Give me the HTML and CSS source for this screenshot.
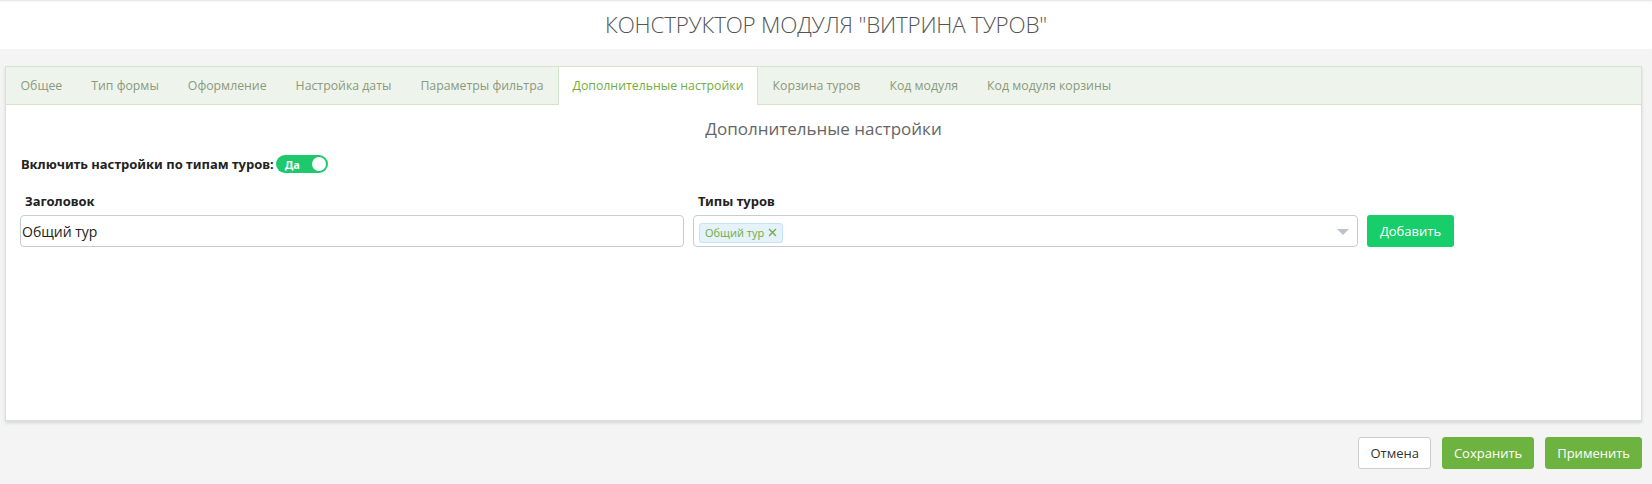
FILE: index.html
```html
<!DOCTYPE html>
<html lang="ru">
<head>
  <meta charset="UTF-8" />
  <title>Конструктор модуля "Витрина туров"</title>
  <link rel="stylesheet" href="styles.css">
</head>
<body>

  <div id="header">
    <h1>КОНСТРУКТОР МОДУЛЯ "ВИТРИНА ТУРОВ"</h1>
  </div>

  <div id="content">
    <div class="card">
      <div class="tabs">
        <a href="#">Общее</a>
        <a href="#">Тип формы</a>
        <a href="#">Оформление</a>
        <a href="#">Настройка даты</a>
        <a href="#">Параметры фильтра</a>
        <a href="#" class="active">Дополнительные настройки</a>
        <a href="#">Корзина туров</a>
        <a href="#">Код модуля</a>
        <a href="#">Код модуля корзины</a>
      </div>

      <div class="card-body">
        <h2>Дополнительные настройки</h2>

        <div class="switch-row">
          <span class="switch-label">Включить настройки по типам туров:</span>
          <span class="switch on"><span class="switch-text">Да</span><span class="knob"></span></span>
        </div>

        <div class="form-row">
          <div class="field">
            <label>Заголовок</label>
            <input type="text" class="input" value="Общий тур">
          </div>
          <div class="field">
            <label>Типы туров</label>
            <div class="select">
              <span class="tag">Общий тур
                <svg class="tag-x" width="9" height="9" viewBox="0 0 9 9"><path d="M1 1L8 8M8 1L1 8" stroke="#73ab43" stroke-width="1.3" fill="none"/></svg>
              </span>
              <span class="caret"></span>
            </div>
          </div>
          <div class="field">
            <label>&nbsp;</label>
            <button class="btn-add">Добавить</button>
          </div>
        </div>
      </div>
    </div>

    <div class="actions">
      <button class="btn btn-default">Отмена</button>
      <button class="btn btn-green">Сохранить</button>
      <button class="btn btn-green">Применить</button>
    </div>
  </div>

</body>
</html>
```

FILE: styles.css
```css
* { box-sizing: border-box; }
body, html {
  margin: 0; padding: 0;
  font-family: "Open Sans", Arial, sans-serif;
  background: #f4f4f4;
  color: #333;
}
#header {
  height: 49px;
  background: #fff;
  box-shadow: inset 0 2px 2px -1px rgba(0,0,0,0.12);
  display: flex;
  align-items: center;
  justify-content: center;
}
#header h1 {
  margin: 0;
  font-size: 22.4px;
  font-weight: 300;
  color: #555;
  letter-spacing: -0.2px;
}
#content {
  padding: 17px 10px 0 5px;
}
.card {
  background: #fff;
  border: 1px solid #d6e4d0;
  height: 355px;
  box-shadow: 0 2px 3px rgba(0,0,0,0.12);
}
.tabs {
  display: flex;
  height: 38px;
  background: #eef4ec;
  border-bottom: 1px solid #d3e4cc;
}
.tabs a {
  display: block;
  padding: 0 13.5px;
  line-height: 37px;
  font-size: 12.3px;
  color: #8a9a7c;
  text-decoration: none;
  border-left: 1px solid transparent;
  border-right: 1px solid transparent;
}
.tabs a.active {
  background: #fff;
  color: #72ae3e;
  border-color: #d3e4cc;
  height: 38px;
}
.card-body {
  padding: 0 14px;
}
.card-body h2 {
  margin: 0;
  padding-top: 11px;
  text-align: center;
  font-size: 17px;
  font-weight: 400;
  color: #666;
  line-height: 26px;
}
.switch-row {
  display: flex;
  align-items: center;
  margin-top: 13px;
  padding-left: 1px;
}
.switch-label {
  font-family: "Noto Sans", sans-serif;
  font-size: 13px;
  font-weight: bold;
  color: #222;
}
.switch {
  display: flex;
  align-items: center;
  width: 52px;
  height: 18px;
  border-radius: 9px;
  background: #1ec96d;
  margin-left: 2px;
  padding: 0 2px 0 9px;
}
.switch-text {
  font-family: "Noto Sans", sans-serif;
  font-size: 11px;
  font-weight: bold;
  color: #fff;
}
.knob {
  margin-left: auto;
  width: 14px;
  height: 14px;
  border-radius: 50%;
  background: #fff;
}
.form-row {
  display: grid;
  grid-template-columns: 664px 665px 87px;
  column-gap: 9px;
  margin-top: 20px;
}
.field label {
  display: block;
  padding-left: 5px;
  font-family: "Noto Sans", sans-serif;
  font-size: 13px;
  font-weight: bold;
  color: #222;
  line-height: 17px;
  margin-bottom: 5px;
}
.input {
  display: block;
  width: 100%;
  height: 32px;
  border: 1px solid #c3ccd7;
  border-radius: 4px;
  padding: 0 0 0 1px;
  font-family: "Open Sans", sans-serif;
  font-size: 14px;
  color: #222;
}
.select {
  position: relative;
  height: 32px;
  border: 1px solid #c3ccd7;
  border-radius: 4px;
  padding: 4px 5px;
}
.tag {
  display: inline-flex;
  align-items: center;
  height: 20px;
  padding: 0 5px;
  background: #e4f2fb;
  border: 1px solid #c6e2f4;
  border-radius: 3px;
  font-size: 11px;
  color: #73ab43;
}
.tag-x {
  margin-left: 4px;
}
.caret {
  position: absolute;
  right: 8px;
  top: 13px;
  border-left: 6px solid transparent;
  border-right: 6px solid transparent;
  border-top: 6px solid #b9c3cd;
}
.btn-add {
  display: block;
  width: 87px;
  height: 32px;
  border: none;
  border-radius: 3px;
  background: #18ce6b;
  color: #fff;
  font-family: "Open Sans", sans-serif;
  font-size: 13px;
}
.actions {
  display: flex;
  justify-content: flex-end;
  gap: 11px;
  margin-top: 16px;
}
.btn {
  height: 32px;
  padding: 0 11px;
  border-radius: 3px;
  font-family: "Open Sans", sans-serif;
  font-size: 13px;
}
.btn-default {
  background: #fff;
  border: 1px solid #ccc;
  color: #333;
}
.btn-green {
  background: #6db33f;
  border: 1px solid #6db33f;
  color: #fff;
}
```
